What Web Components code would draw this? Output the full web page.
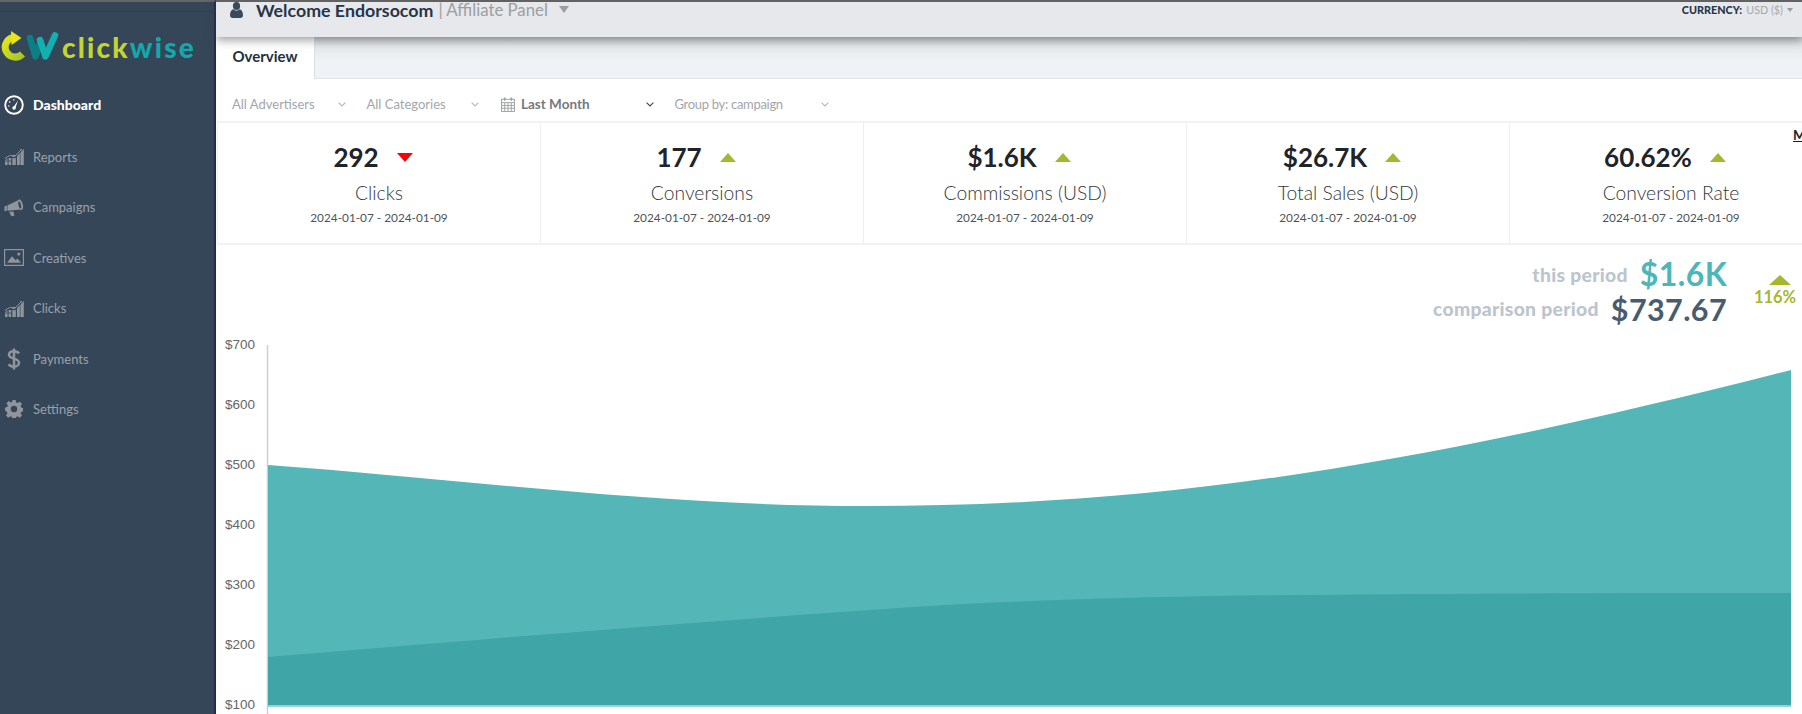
<!DOCTYPE html>
<html><head><meta charset="utf-8">
<style>
html,body{margin:0;padding:0;width:1802px;height:714px;overflow:hidden;background:#fff;font-family:Lato,"Liberation Sans",sans-serif}
</style></head><body>
<app-shell></app-shell>
<script>
const barsIcon='<svg width="19" height="17" viewBox="0 0 19 17" fill="#8e959d"><rect x="0" y="10" width="2.600" height="2.600"/><rect x="0" y="13.400" width="2.600" height="3.600"/><rect x="3.600" y="10" width="2.600" height="2.600"/><rect x="3.600" y="13.400" width="2.600" height="3.600"/><rect x="7.400" y="7" width="3.400" height="10"/><rect x="12" y="5" width="2.800" height="12"/><rect x="15.400" y="1" width="3.400" height="16"/><path d="M0 11.500L5.500 8.500 9.500 9.800 18.500 .3" fill="none" stroke="#364659" stroke-width="1.300"/><path d="M0 10.200L5.500 7.200 9.500 8.500 17 1" fill="none" stroke="#8e959d" stroke-width="1"/></svg>';
const I={
gauge:'<svg width="20" height="20" viewBox="0 0 20 20"><circle cx="10" cy="10" r="8.800" fill="none" stroke="#fff" stroke-width="1.900"/><path d="M8.800 13L14 5.400 11.200 13.800z" fill="#fff"/><circle cx="10" cy="13" r="1.700" fill="#fff"/><path d="M4 11h1.500M5.200 6.500l1.100 1M9.800 4.200v1.400" stroke="#fff" stroke-width="1.200"/></svg>',
bars:barsIcon,
horn:'<svg width="21" height="19" viewBox="0 0 21 19" fill="#8e959d"><path d="M.5 8.500L3 7.500l0 5.500-2.500 .5z"/><path d="M3.700 7.200L15.500 1.600 18 11.500 3.700 13z"/><path d="M5.500 14l4.300-.4 1.200 4.400-3.300 .8z"/><ellipse cx="17.200" cy="6.600" rx="2.600" ry="5.600" transform="rotate(-14 17.200 6.600)"/><ellipse cx="16.500" cy="6.800" rx="1.300" ry="3.800" transform="rotate(-14 16.500 6.800)" fill="#364659"/></svg>',
pic:'<svg width="20" height="17" viewBox="0 0 20 17"><rect x=".6" y=".6" width="18.800" height="15.800" fill="none" stroke="#8e959d" stroke-width="1.200"/><path d="M3 13.800L8 7.200l3.600 4 1.900-1.600 3.500 4.200z" fill="#8e959d"/><circle cx="14.800" cy="5" r="1.600" fill="#8e959d"/></svg>',
dollar:'<svg width="14" height="22" viewBox="0 0 14 22"><path d="M12 5.500C11 4 9.200 3.300 7 3.300 4 3.300 2 4.700 2 6.800c0 5 10 2.600 10 8 0 2.200-2.200 3.800-5 3.800-2.400 0-4.200-.8-5.400-2.400M7 .5v21" fill="none" stroke="#8e959d" stroke-width="2.500"/></svg>',
gear:'<svg width="18" height="18" viewBox="0 0 18 18"><path fill="#8e959d" fill-rule="evenodd" d="M7.400 0h3.200l.5 2.500 1.500.6 2.200-1.400 2.200 2.200-1.400 2.200.6 1.500 2.300.5v3.200l-2.300.5-.6 1.500 1.400 2.200-2.200 2.200-2.200-1.400-1.500.6-.5 2.300H7.400l-.5-2.300-1.500-.6-2.200 1.400-2.200-2.200 1.400-2.200-.6-1.500L0 10.600V7.400l2.300-.5.6-1.500-1.400-2.200 2.200-2.200 2.200 1.400 1.500-.6zM9 5.800a3.200 3.200 0 1 0 0 6.400 3.200 3.200 0 0 0 0-6.400z"/></svg>',
user:'<svg width="13" height="16" viewBox="0 0 13 16" fill="#39495a"><ellipse cx="6.500" cy="4" rx="3.600" ry="4"/><path d="M0 13.200C0 9.600 1.600 7.600 3.400 7.300 4.200 8.200 5.300 8.700 6.500 8.700s2.300-.5 3.100-1.400C11.400 7.600 13 9.600 13 13.200 13 15 11.800 16 10.400 16H2.600C1.200 16 0 15 0 13.200z"/></svg>',
cal:'<svg width="14" height="15" viewBox="0 0 15 16" fill="none" stroke="#9c9fa3" stroke-width="1"><rect x=".6" y="2.400" width="13.800" height="13"/><path d="M.6 6h13.800M.6 9h13.800M.6 12h13.800M4 6v9.400M7.500 6v9.400M11 6v9.400"/><rect x="3" y=".5" width="1.800" height="3.500" fill="#9c9fa3" stroke="none"/><rect x="10.200" y=".5" width="1.800" height="3.500" fill="#9c9fa3" stroke="none"/></svg>'
};
function def(name,html){customElements.define(name,class extends HTMLElement{connectedCallback(){if(this.shadowRoot)return;const s=this.attachShadow({mode:'open'});s.innerHTML=typeof html==='function'?html(this):html;}});}

def('brand-logo',`<style>
:host{display:flex;align-items:center;height:44px;padding-left:1px}
svg{display:block;flex:none}
span{font:900 28px/1 Lato,"Liberation Sans",sans-serif;letter-spacing:2.200px;margin-left:2px;color:#c3d52e}
b{font-weight:900;color:#12a9ab}
</style>
<svg width="59" height="32" viewBox="0 0 59 32"><defs><linearGradient id="c" x1="0" y1="0" x2="1" y2="1"><stop offset="0" stop-color="#e6e61a"/><stop offset="1" stop-color="#a5c52c"/></linearGradient></defs>
<path d="M11.500 6.500A10 10 0 1 0 21.500 23" fill="none" stroke="url(#c)" stroke-width="7"/><path d="M10 0l10.500 7-10 7z" fill="#e6e61a"/>
<path d="M29 7l5.500 18.500 5-15" fill="none" stroke="#0b7f86" stroke-width="6.500" stroke-linecap="round" stroke-linejoin="round"/>
<path d="M39 9l5.500 16.500 9.500-21" fill="none" stroke="#13b0b0" stroke-width="6.500" stroke-linecap="round" stroke-linejoin="round"/></svg>
<span>click<b>wise</b></span>`);

def('nav-item',h=>`<style>
:host{display:flex;align-items:center;height:50.500px;color:#99a1a9;font-size:13px;font-weight:400}
:host([active]){color:#fff;font-weight:900;font-size:14px;height:53.500px}
i{width:20px;height:22px;display:flex;align-items:center;justify-content:center;margin:0 9px 0 4px;flex:none}
svg{display:block}
</style><i>${I[h.getAttribute('icon')]}</i><slot></slot>`);

def('side-bar',`<style>
:host{display:block;width:214px;flex:none;background:#364659;border-right:2px solid #1f2f50;height:100%}
.rule{height:9px;border-bottom:1px solid #2f3e50}
brand-logo{margin-top:13px}
nav{margin-top:9px;display:block}
</style><div class="rule"></div><brand-logo></brand-logo><nav>
<nav-item icon="gauge" active>Dashboard</nav-item>
<nav-item icon="bars">Reports</nav-item>
<nav-item icon="horn">Campaigns</nav-item>
<nav-item icon="pic">Creatives</nav-item>
<nav-item icon="bars">Clicks</nav-item>
<nav-item icon="dollar">Payments</nav-item>
<nav-item icon="gear">Settings</nav-item></nav>`);

def('top-bar',`<style>
:host{display:flex;justify-content:space-between;align-items:flex-start;height:35px;background:#e6e8eb;position:relative;z-index:2;box-shadow:0 3px 9px rgba(60,60,60,.5);padding:0 9px 0 14px}
.l{display:flex;align-items:center;height:15px;font-size:16.800px;color:#9a9ea3}
.l svg{margin-right:13px;display:block}
.l b{color:#26364a;font-weight:700;margin-right:5px;font-size:17.800px}
.l .t{width:0;height:0;border:5.500px solid transparent;border-top:7px solid #9a9ea3;border-bottom:0;margin-left:11px}
.r{display:flex;align-items:center;height:15px;font-size:10.800px;color:#a5a8ac}
.r b{color:#26364a;font-weight:900;margin-right:4px}
.r .t{width:0;height:0;border:3.500px solid transparent;border-top:4px solid #9a9ea3;border-bottom:0;margin-left:4px}
</style><div class="l">${I.user}<b>Welcome Endorsocom</b>| Affiliate Panel<span class="t"></span></div>
<div class="r"><b>CURRENCY:</b>USD ($)<span class="t"></span></div>`);

def('tab-bar',`<style>
:host{display:flex;height:41px;background:linear-gradient(#cfd2d5 0,#e6e9ec 10px,#eff3f6 24px);border-bottom:1px solid #dfe5ea}
div{width:99px;background:#fff;border-right:1px solid #d8dee3;display:flex;align-items:center;justify-content:center;font-weight:700;font-size:15px;color:#26303c;height:42px;box-sizing:border-box;padding-bottom:5px}
</style><div>Overview</div>`);

def('filter-item',h=>`<style>
:host{display:flex;align-items:center;font-size:13px;color:#a2a6aa;font-weight:400;box-sizing:border-box;width:${h.getAttribute('w')}px;flex:none}
:host([strong]){color:#75797d;font-weight:700;font-size:13.500px}
.w{flex:1}
svg.i{margin:0 6px 0 2px;display:block}
</style>${h.hasAttribute('cal')?I.cal.replace('<svg','<svg class="i"'):''}<slot></slot><span class="w"></span>
<svg width="8" height="5" viewBox="0 0 8 5" fill="none" stroke="${h.hasAttribute('strong')?'#444':'#b5b8bb'}" stroke-width="1.100"><path d="M.6 .6L4 4l3.400-3.400"/></svg>`);

def('filter-bar',`<style>
:host{display:flex;align-items:center;height:42px;box-sizing:border-box;padding:8px 0 0 16px;gap:20.500px}
</style><filter-item w="114">All Advertisers</filter-item><filter-item w="112">All Categories</filter-item><filter-item w="155" cal strong>Last Month</filter-item><filter-item w="154" style="letter-spacing:-.3px">Group by: campaign</filter-item>`);

def('kpi-card',h=>{const up=h.getAttribute('dir')!=='down';return `<style>
:host{display:flex;flex-direction:column;align-items:center;width:323px;flex:none;box-sizing:border-box;border-right:1.500px solid #efefef;height:100%;padding-top:16px}
.v{display:flex;align-items:center;height:36px;font-size:26px;font-weight:700;color:#1f2428;margin-right:12px}
.t{width:0;height:0;border:8px solid transparent;margin-left:18px}
.up{border-bottom:9px solid #a5b72e;border-top:0}
.dn{border-top:9px solid #fb0007;border-bottom:0}
.l{font-size:19.300px;font-weight:300;color:#33383c;margin-top:5px;line-height:26px}
.d{font-size:11.800px;color:#4e5256;margin-top:2px;line-height:20px}
</style><div class="v">${h.getAttribute('value')}<span class="t ${up?'up':'dn'}"></span></div><div class="l">${h.getAttribute('label')}</div><div class="d">2024-01-07 - 2024-01-09</div>`});

def('kpi-strip',`<style>
:host{display:flex;height:124px;box-sizing:border-box;border-top:2px solid #f2f2f2;border-bottom:2.500px solid #f2f2f2;border-left:1.500px solid #f2f2f2;margin-left:1px;position:relative}
a{position:absolute;right:0;top:4px;width:9px;overflow:hidden;font:700 13.500px/17px Lato,sans-serif;color:#222;text-decoration:underline}
</style><kpi-card value="292" label="Clicks" dir="down"></kpi-card><kpi-card value="177" label="Conversions"></kpi-card><kpi-card value="$1.6K" label="Commissions (USD)"></kpi-card><kpi-card value="$26.7K" label="Total Sales (USD)"></kpi-card><kpi-card value="60.62%" label="Conversion Rate"></kpi-card><a>M</a>`);

def('period-summary',`<style>
:host{display:flex;justify-content:flex-end;height:83px;box-sizing:border-box;padding:12px 7px 0 0}
.rows{display:flex;flex-direction:column;align-items:flex-end}
.row{display:flex;align-items:center;height:34.500px;line-height:1;font-weight:900;font-size:19.300px;color:#bcc5ce;letter-spacing:.3px}
.row b{font-size:32px;line-height:1;font-weight:700;margin-left:12px;letter-spacing:.4px}
.c b{font-size:30.500px}
.a b{color:#4db6b8}.c b{color:#485c6f}
.delta{width:40px;margin-left:28px;display:flex;flex-direction:column;align-items:center;padding-top:18px;color:#a5b72e;font-weight:700;font-size:16.500px;line-height:1.2}
.delta i{width:0;height:0;border:11px solid transparent;border-bottom:10px solid #a5b72e;border-top:0;margin:0 0 3px 9px}
</style><div class="rows"><div class="row a">this period<b>$1.6K</b></div><div class="row c">comparison period<b>$737.67</b></div></div><div class="delta"><i></i>116%</div>`);

def('area-chart',`<style>
:host{display:block;height:386px;margin-left:-216px;position:relative}
svg{display:block}
text{font:13.500px "Liberation Sans",Arial,sans-serif;fill:#666;text-anchor:end}
</style><svg width="1802" height="386" viewBox="0 328 1802 386">
<path d="M267.500 345V714" stroke="#cfcfcf" stroke-width="1.500"/>
<path d="M267 706.500H1791" stroke="#9fd6d6" stroke-width="1.500"/>
<path fill="#55b6b7" d="M268 465C470 480 660 506 867 506C1150 506 1400 470 1791 370V705H268Z"/>
<path fill="#40a5a7" d="M268 657C400 646 640 626 898 608C1040 599 1170 596 1300 595C1500 593 1650 593 1791 593V705.500H268Z"/>
<text x="255" y="349">$700</text><text x="255" y="409">$600</text><text x="255" y="469">$500</text><text x="255" y="529">$400</text><text x="255" y="589">$300</text><text x="255" y="649">$200</text><text x="255" y="709">$100</text>
</svg>`);

def('app-shell',`<style>
:host{display:flex;width:1802px;height:714px;overflow:hidden}
main{flex:1;min-width:0;display:flex;flex-direction:column;border-top:2px solid #666}
side-bar{border-top:2px solid #666}
</style><side-bar></side-bar><main><top-bar></top-bar><tab-bar></tab-bar><filter-bar></filter-bar><kpi-strip></kpi-strip><period-summary></period-summary><area-chart></area-chart></main>`);
</script></body></html>
